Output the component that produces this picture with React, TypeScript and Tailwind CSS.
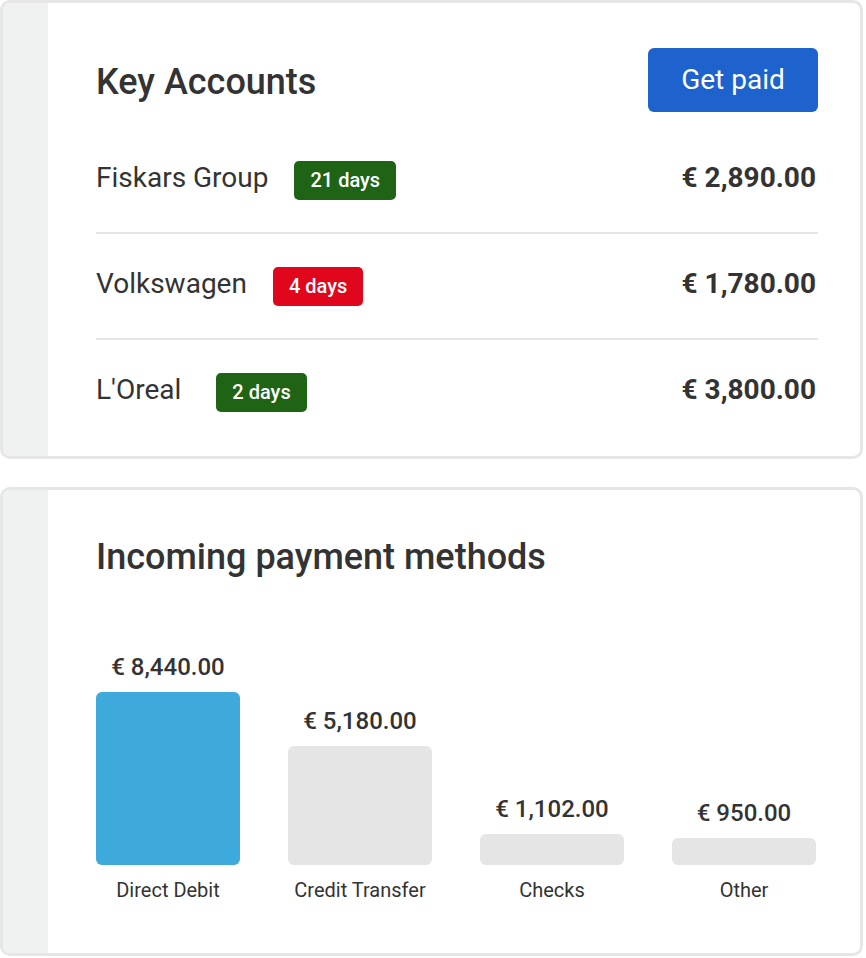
import React from 'react';

const accounts = [
  { name: 'Fiskars Group', days: '21 days', late: false, amount: '€ 2,890.00', gap: 'ml-0' },
  { name: 'Volkswagen', days: '4 days', late: true, amount: '€ 1,780.00', gap: 'ml-0' },
  { name: "L'Oreal", days: '2 days', late: false, amount: '€ 3,800.00', gap: 'ml-[9px]' },
];

const methods = [
  { label: 'Direct Debit', value: '€ 8,440.00', height: 173, active: true },
  { label: 'Credit Transfer', value: '€ 5,180.00', height: 119, active: false },
  { label: 'Checks', value: '€ 1,102.00', height: 31, active: false },
  { label: 'Other', value: '€ 950.00', height: 27, active: false },
];

const Card = ({ children, className }: { children: React.ReactNode; className?: string }) => (
  <div className={`flex w-[863px] rounded-[10px] border-[3px] border-[#e6e6e6] overflow-hidden bg-white ${className ?? ''}`}>
    <div className="w-[45px] shrink-0 bg-[#f0f1f1]" />
    <div className="flex-1 pl-[48px] pr-[44px]">{children}</div>
  </div>
);

export default function App() {
  return (
    <div className="w-[866px] h-[958px] bg-white font-['Roboto',sans-serif] text-[#333333]">
      <Card>
        <div className="pt-[45px] pb-[12px]">
          {/* Header */}
          <div className="flex items-center justify-between h-[64px]">
            <h1 className="pt-[4px] text-[36px] leading-[40px] font-medium">Key Accounts</h1>
            <button className="h-[64px] w-[170px] -mr-[2px] rounded-[6px] bg-[#1d62cd] text-white text-[28px]">
              Get paid
            </button>
          </div>

          {/* Account rows */}
          <div className="mt-[16px] -mr-[2px]">
            {accounts.map((a, i) => (
              <div
                key={i}
                className={`flex items-center justify-between pr-[2px] ${
                  i === 0 ? 'h-[104px]' : 'h-[106px] border-t-2 border-[#e6e6e6]'
                }`}
              >
                <div className="flex items-center gap-[26px]">
                  <span className="pb-[4px] text-[28px] leading-[32px]">{a.name}</span>
                  <span
                    className={`${a.gap} h-[39px] px-[16px] rounded-[5px] flex items-center text-white text-[20px] font-medium ${
                      a.late ? 'bg-[#e0071d]' : 'bg-[#1e6414]'
                    }`}
                  >
                    {a.days}
                  </span>
                </div>
                <span className="pb-[4px] text-[28px] leading-[32px] font-bold">{a.amount}</span>
              </div>
            ))}
          </div>
        </div>
      </Card>

      <Card className="mt-[28px]">
        <div className="pt-[47px] pb-[51px]">
          <h2 className="text-[36px] leading-[40px] font-medium">Incoming payment methods</h2>

          {/* Bar chart */}
          <div className="mt-[76px] grid grid-cols-4 gap-[48px] items-end">
            {methods.map((m, i) => (
              <div key={i} className="flex flex-col items-center">
                <span className="text-[24px] leading-[28px] font-medium">{m.value}</span>
                <div
                  className={`mt-[11px] w-full rounded-[6px] ${m.active ? 'bg-[#3ea9db]' : 'bg-[#e5e5e5]'}`}
                  style={{ height: m.height }}
                />
                <span className="mt-[13px] text-[20px] leading-[24px]">{m.label}</span>
              </div>
            ))}
          </div>
        </div>
      </Card>
    </div>
  );
}
